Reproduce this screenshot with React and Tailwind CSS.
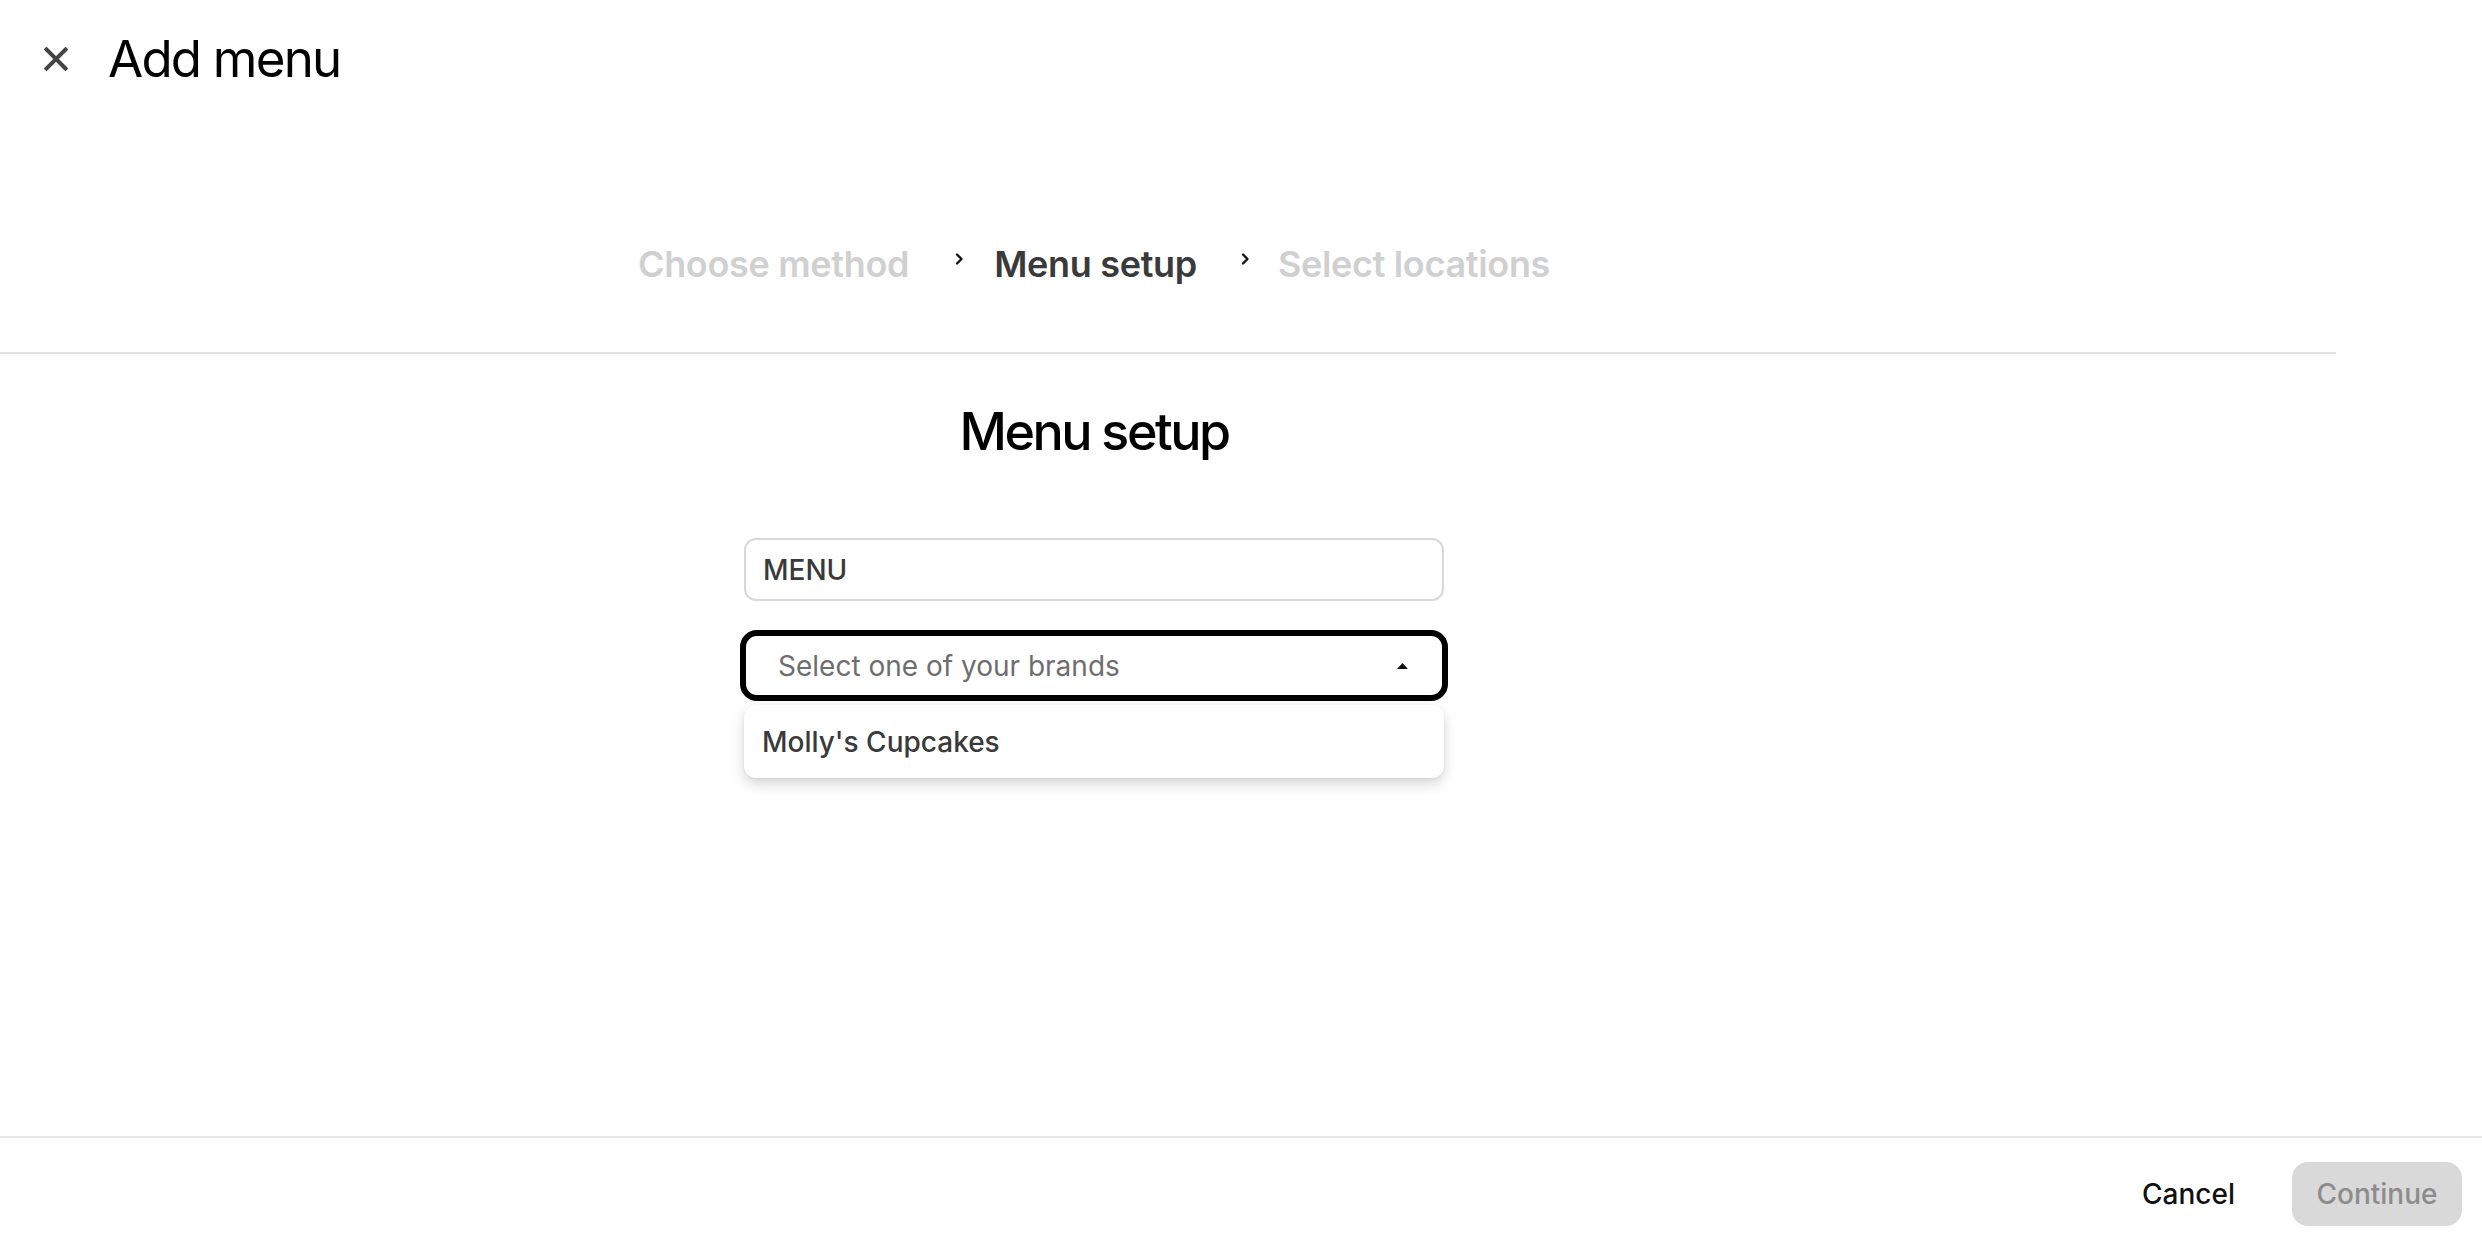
import React from "react";

function Chevron() {
  return (
    <svg width="10" height="12" viewBox="0 0 10 12" className="-mt-[10px] shrink-0" fill="none">
      <path d="M3 1.5 L7.5 6 L3 10.5" stroke="#111" strokeWidth="2.3" strokeLinecap="round" strokeLinejoin="round" />
    </svg>
  );
}

export default function App() {
  return (
    <div className="h-[1236px] w-[2482px] bg-white flex flex-col overflow-hidden" style={{ fontFamily: "Inter, 'Noto Sans', sans-serif" }}>
      <div className="flex-1 flex flex-col">
        {/* Header */}
        <div className="pt-[28px] pl-[44px] flex items-center gap-[40px]">
          <svg width="24" height="24" viewBox="0 0 24 24" fill="none" className="shrink-0">
            <path d="M2.5 2.5 L21.5 21.5 M21.5 2.5 L2.5 21.5" stroke="#444" strokeWidth="4" strokeLinecap="square" />
          </svg>
          <h1 className="text-[51px] leading-[62px] font-normal text-black tracking-[-0.035em]">Add menu</h1>
        </div>

        {/* Breadcrumb */}
        <div className="w-[2336px] border-b-2 border-[#e2e2e2] pt-[152px] pb-[66px]">
          <div className="w-[2188px] flex justify-center items-center text-[36px] leading-[44px] font-semibold tracking-[-0.009em]">
            <span className="text-[#d0d0d0]">Choose method</span>
            <span className="ml-[45px] mr-[30px] flex items-center h-[44px]"><Chevron /></span>
            <span className="text-[#3a3a3a]">Menu setup</span>
            <span className="ml-[43px] mr-[28px] flex items-center h-[44px]"><Chevron /></span>
            <span className="text-[#d0d0d0]">Select locations</span>
          </div>
        </div>

        {/* Content */}
        <div className="w-[2188px] flex flex-col items-center">
          <h2 className="mt-[46px] text-[52px] leading-[64px] font-medium text-black tracking-[-0.048em]">Menu setup</h2>

          <div className="mt-[74px] w-[700px] h-[63px] border-2 border-[#d8d8d8] rounded-[12px] flex items-center pl-[17px] text-[28px] font-medium text-[#3a3a3a]">
            MENU
          </div>

          <div className="relative mt-[29px]">
            <div className="w-[708px] h-[71px] border-[6px] border-black rounded-[17px] flex items-center justify-between pl-[32px] pr-[34px]">
              <span className="text-[28px] text-[#6e6e6e] font-normal">Select one of your brands</span>
              <svg width="11" height="6" viewBox="0 0 11 6" className="shrink-0">
                <path d="M5.5 0 L11 6 L0 6 Z" fill="#111" />
              </svg>
            </div>
            <div className="absolute left-[4px] top-[75px] w-[700px] h-[73px] bg-white rounded-[12px] shadow-[0_6px_14px_rgba(0,0,0,0.16),0_1px_3px_rgba(0,0,0,0.06)] flex items-center pl-[18px] text-[28px] font-medium text-[#3a3a3a]">
              Molly's Cupcakes
            </div>
          </div>
        </div>
      </div>

      {/* Footer */}
      <div className="border-t-2 border-[#e8e8e8] pt-[24px] pb-[10px] pr-[20px] flex items-center justify-end">
        <button className="text-[28px] font-medium text-[#111] mr-[57px]">Cancel</button>
        <button className="h-[64px] w-[170px] rounded-[16px] bg-[#d9d9d9] text-[28px] font-medium text-[#8c8c8c]">Continue</button>
      </div>
    </div>
  );
}
